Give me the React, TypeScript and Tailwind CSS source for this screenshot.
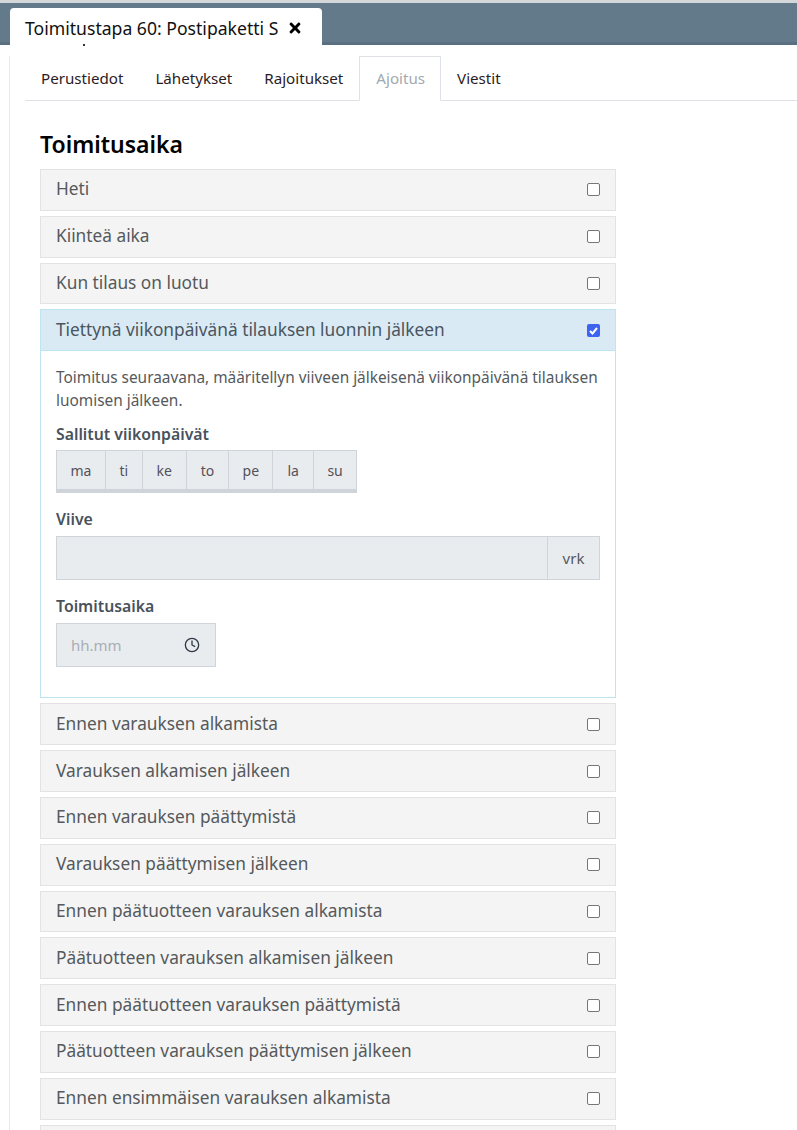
import { Clock } from 'lucide-react';
import { FaTimes } from 'react-icons/fa';

const before = ['Heti', 'Kiinteä aika', 'Kun tilaus on luotu'];
const after = [
  'Ennen varauksen alkamista',
  'Varauksen alkamisen jälkeen',
  'Ennen varauksen päättymistä',
  'Varauksen päättymisen jälkeen',
  'Ennen päätuotteen varauksen alkamista',
  'Päätuotteen varauksen alkamisen jälkeen',
  'Ennen päätuotteen varauksen päättymistä',
  'Päätuotteen varauksen päättymisen jälkeen',
  'Ennen ensimmäisen varauksen alkamista',
  '',
];
const days = [
  { label: 'ma', w: 'w-[49px]' },
  { label: 'ti', w: 'w-[37px]' },
  { label: 'ke', w: 'w-[44px]' },
  { label: 'to', w: 'w-[43px]' },
  { label: 'pe', w: 'w-[44px]' },
  { label: 'la', w: 'w-[41px]' },
  { label: 'su', w: 'w-[42px]' },
];

function Row({ label }: { label: string }) {
  return (
    <div className="mb-[5px] flex h-[41.8px] shrink-0 items-center justify-between border border-[#e3e3e3] bg-[#f4f4f4] pl-[15px] pr-[15px] text-[17.3px] text-[#55595c]">
      <span className="-mt-[1px]">{label}</span>
      <span className="h-[13px] w-[13px] rounded-[2px] border border-[#767676] bg-white" />
    </div>
  );
}

export default function App() {
  return (
    <div className="h-[1130px] w-[797px] overflow-hidden bg-white font-['Noto_Sans','Open_Sans',sans-serif] text-[#212529]">
      <div className="h-[3px] bg-[#d5d8da]" />
      <div className="flex h-[42px] items-end border-b-[3px] border-[#5a7080] bg-[#637a8b] pl-[10px]">
        <div className="relative -mb-[3px] flex h-[37px] w-[312px] items-center gap-[9px] rounded-t-[4px] bg-white pl-[15px] pt-[3px] text-[17.6px] text-[#111]">
          <span>Toimitustapa 60: Postipaketti S</span>
          <FaTimes size={16} className="text-black" />
          <span className="absolute left-[73px] top-[36px] h-[2px] w-[2px] bg-[#333]" />
        </div>
      </div>

      <div className="ml-[9px] h-[1085px] border-l border-[#e8e8e8] pl-[15px]">
        <div className="mt-[11px] flex h-[45px] items-end border-b border-[#dee2e6] text-[15.15px] text-[#2b1b24]">
          <a className="flex h-[44px] items-center pl-[16px] pr-[16px]">Perustiedot</a>
          <a className="flex h-[44px] items-center pl-[16px] pr-[16px]">Lähetykset</a>
          <a className="flex h-[44px] items-center pl-[16px] pr-[16px]">Rajoitukset</a>
          <a className="-mb-px flex h-[45px] items-center border border-b-white border-[#dee2e6] bg-white pl-[16px] pr-[15px] text-[#a3a9b0]">Ajoitus</a>
          <a className="flex h-[44px] items-center pl-[16px] pr-[16px]">Viestit</a>
        </div>

        <div className="w-[591px] pl-[15px] pt-[26px]">
          <h2 className="mb-[7px] h-[35px] text-[23px] leading-[35px] font-semibold text-black">Toimitusaika</h2>

          {before.map((label) => (
            <Row key={label} label={label} />
          ))}

          <div className="mb-[5px] h-[389px] border border-[#bee5f0]">
            <div className="flex h-[41px] items-center justify-between border-b border-[#bee5f0] bg-[#d9eaf5] pl-[15px] pr-[15px] text-[17.3px] text-[#4a5560]">
              <span className="-mt-[1px]">Tiettynä viikonpäivänä tilauksen luonnin jälkeen</span>
              <span className="flex h-[13px] w-[13px] items-center justify-center rounded-[2px] bg-[#3d64f0]">
                <svg viewBox="0 0 13 13" className="h-[13px] w-[13px]">
                  <path d="M3 7l2.5 2.5L10 4" fill="none" stroke="white" strokeWidth="2" />
                </svg>
              </span>
            </div>

            <div className="pl-[15px] pr-[15px] pt-[15px] text-[#55595c]">
              <p className="text-[15.4px] leading-[23px]">
                Toimitus seuraavana, määritellyn viiveen jälkeisenä viikonpäivänä tilauksen luomisen jälkeen.
              </p>

              <div className="mt-[10px] h-[28px] text-[15.8px] leading-[24px] font-semibold text-[#48525c]">Sallitut viikonpäivät</div>
              <div className="flex h-[43px] w-[301px] border border-b-[4px] border-[#ced4da] bg-[#e9ecef] text-[14px] text-[#55505a]">
                {days.map((d, i) => (
                  <div key={d.label} className={`${d.w} flex items-center justify-center ${i < 6 ? 'border-r border-[#ced4da]' : ''}`}>
                    {d.label}
                  </div>
                ))}
              </div>

              <div className="mt-[14px] h-[24px] text-[15.8px] leading-[24px] font-semibold text-[#48525c]">Viive</div>
              <div className="mt-[5px] flex h-[44px] border border-[#ced4da] bg-[#e9ecef]">
                <div className="flex-1" />
                <div className="flex w-[52px] items-center justify-center border-l border-[#ced4da] text-[15px] text-[#55595c]">vrk</div>
              </div>

              <div className="mt-[14px] h-[24px] text-[15.8px] leading-[24px] font-semibold text-[#48525c]">Toimitusaika</div>
              <div className="mt-[5px] flex h-[44px] w-[160px] border border-[#ced4da] bg-[#e9ecef]">
                <div className="flex w-[114px] items-center pl-[14px] text-[15px] text-[#a8aeb5]">hh.mm</div>
                <div className="flex flex-1 items-center justify-center pr-[2px] text-[#2f3b47]">
                  <Clock size={16} strokeWidth={2} />
                </div>
              </div>
            </div>
          </div>

          {after.map((label, i) => (
            <Row key={i} label={label} />
          ))}
        </div>
      </div>
    </div>
  );
}
